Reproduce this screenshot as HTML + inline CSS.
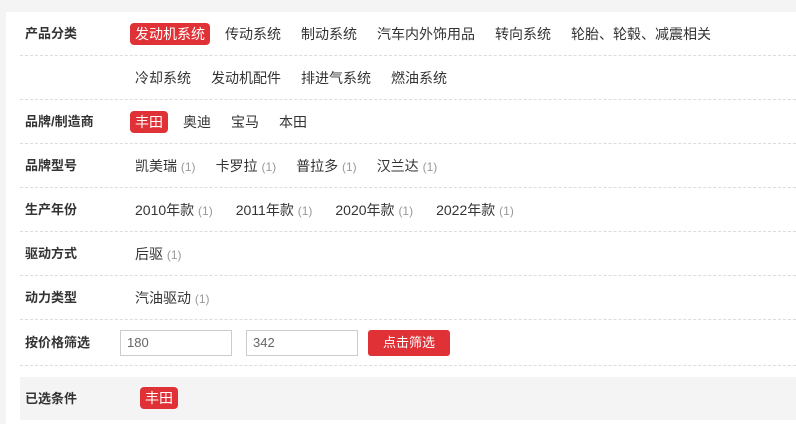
<!DOCTYPE html>
<html><head><meta charset="utf-8"><style>
body{margin:0;background:#f4f4f4;font-family:"Liberation Sans","Noto Sans CJK SC",sans-serif;width:796px;height:424px;overflow:hidden}
.panel{position:absolute;left:6px;top:12px;right:0;bottom:0;background:#fff}
.row{position:absolute;left:14px;right:0;height:43px;border-bottom:1px dashed #dcdcdc}
.lab{position:absolute;left:5px;top:0;line-height:43px;font-size:13px;font-weight:bold;color:#333}
.items{position:absolute;left:110px;top:11px;white-space:nowrap}
.it{display:inline-block;height:22px;line-height:22px;padding:0 5px;margin-right:10px;font-size:14px;color:#333;border-radius:4px}
.it.on{background:#e03236;color:#fff}
.c{font-size:12px;color:#999}
.yr .it{margin-right:13px}
.in{position:absolute;top:10px;border:1px solid #ccc;font-size:13px;color:#666;line-height:24px;padding-left:6px;box-sizing:border-box;width:112px;height:26px}
.btn{position:absolute;left:348px;top:10px;width:82px;height:26px;background:#e03236;color:#fff;font-size:13px;line-height:26px;text-align:center;border-radius:3px}
.sel{position:absolute;left:14px;top:365px;right:0;height:43px;background:#f4f4f4}
</style></head><body><div class="panel">
<div class="row" style="top:0"><div class="lab">产品分类</div><div class="items"><span class="it on">发动机系统</span><span class="it">传动系统</span><span class="it">制动系统</span><span class="it">汽车内外饰用品</span><span class="it">转向系统</span><span class="it">轮胎、轮毂、减震相关</span></div></div>
<div class="row" style="top:44px"><div class="items"><span class="it">冷却系统</span><span class="it">发动机配件</span><span class="it">排进气系统</span><span class="it">燃油系统</span></div></div>
<div class="row" style="top:88px"><div class="lab">品牌/制造商</div><div class="items"><span class="it on">丰田</span><span class="it">奥迪</span><span class="it">宝马</span><span class="it">本田</span></div></div>
<div class="row" style="top:132px"><div class="lab">品牌型号</div><div class="items"><span class="it">凯美瑞 <span class="c">(1)</span></span><span class="it">卡罗拉 <span class="c">(1)</span></span><span class="it">普拉多 <span class="c">(1)</span></span><span class="it">汉兰达 <span class="c">(1)</span></span></div></div>
<div class="row" style="top:176px"><div class="lab">生产年份</div><div class="items yr"><span class="it">2010年款 <span class="c">(1)</span></span><span class="it">2011年款 <span class="c">(1)</span></span><span class="it">2020年款 <span class="c">(1)</span></span><span class="it">2022年款 <span class="c">(1)</span></span></div></div>
<div class="row" style="top:220px"><div class="lab">驱动方式</div><div class="items"><span class="it">后驱 <span class="c">(1)</span></span></div></div>
<div class="row" style="top:264px"><div class="lab">动力类型</div><div class="items"><span class="it">汽油驱动 <span class="c">(1)</span></span></div></div>
<div class="row" style="top:308px;height:45px"><div class="lab" style="line-height:45px">按价格筛选</div><div class="in" style="left:100px">180</div><div class="in" style="left:226px">342</div><div class="btn">点击筛选</div></div>
<div class="sel"><div class="lab" style="line-height:43px">已选条件</div><span class="it on" style="position:absolute;left:120px;top:10px">丰田</span></div>
</div></body></html>
